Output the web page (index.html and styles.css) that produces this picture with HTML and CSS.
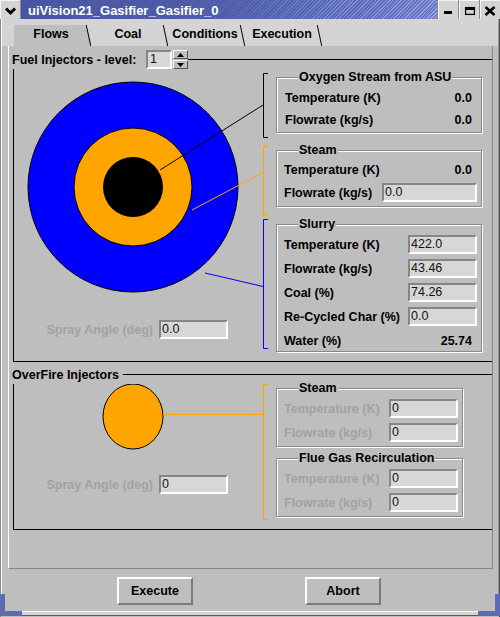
FILE: index.html
```html
<!DOCTYPE html>
<html>
<head>
<meta charset="utf-8">
<title>uiVision21_Gasifier_Gasifier_0</title>
<link rel="stylesheet" href="styles.css">
</head>
<body>
<div class="window">
  <div class="titlebar">
    <div class="tb-menu">
      <svg width="20" height="19" viewBox="0 0 20 19"><path d="M6 8.5 L10.5 13 L15 8.5" fill="none" stroke="#000" stroke-width="3"/></svg>
    </div>
    <div class="tb-title">uiVision21_Gasifier_Gasifier_0</div>
    <div class="tb-buttons">
      <div class="tb-btn"><svg width="20" height="19" viewBox="0 0 20 19"><rect x="6" y="11" width="8" height="3" fill="#000"/></svg></div>
      <div class="tb-btn"><svg width="20" height="19" viewBox="0 0 20 19"><rect x="6.6" y="7.6" width="8.8" height="6.8" fill="none" stroke="#000" stroke-width="1.3"/><rect x="6" y="7" width="10" height="3" fill="#000"/></svg></div>
      <div class="tb-btn"><svg width="20" height="19" viewBox="0 0 20 19"><path d="M5.5 7 L14.5 15 M14.5 7 L5.5 15" stroke="#000" stroke-width="2.6"/></svg></div>
    </div>
  </div>

  <div class="frame">
    <div class="tabbar">
      <div class="tab active">Flows</div>
      <div class="tab">Coal</div>
      <div class="tab">Conditions</div>
      <div class="tab">Execution</div>
    </div>

    <div class="panel">
      <div class="grp-head">
        <span class="grp-title fuel-title">Fuel Injectors - level:</span>
        <div class="spin">
          <span class="field w26">1</span>
          <div class="spin-btns">
            <div class="spin-btn"><svg width="7" height="4" viewBox="0 0 7 4"><path d="M0 4 L3.5 0 L7 4 Z" fill="#000"/></svg></div>
            <div class="spin-btn"><svg width="7" height="4" viewBox="0 0 7 4"><path d="M0 0 L3.5 4 L7 0 Z" fill="#000"/></svg></div>
          </div>
        </div>
        <span class="grp-line"></span>
      </div>

      <div class="grp-body fuel-body">
        <div class="diagram-col">
          <svg class="diagram" width="262" height="292" viewBox="14 69 262 292">
            <circle cx="133" cy="187" r="105" fill="#0000ff" stroke="#000" stroke-width="1"/>
            <circle cx="133" cy="187" r="59" fill="#ffa500" stroke="#000" stroke-width="1"/>
            <circle cx="133" cy="187" r="30" fill="#000"/>
            <line x1="160" y1="170" x2="263" y2="105" stroke="#000" stroke-width="1"/>
            <line x1="192" y1="210" x2="263" y2="172.5" stroke="#ffa500" stroke-width="1"/>
            <line x1="205" y1="273" x2="263" y2="286.5" stroke="#0000ff" stroke-width="1"/>
            <path d="M268 73.5 H263.5 V137.5 H268" fill="none" stroke="#000" stroke-width="1"/>
            <path d="M268 146.5 H263.5 V214.5 H268" fill="none" stroke="#ffa500" stroke-width="1"/>
            <path d="M268 219.5 H263.5 V348.5 H268" fill="none" stroke="#0000ff" stroke-width="1"/>
          </svg>
          <div class="spray">
            <span class="disabled">Spray Angle (deg)</span>
            <span class="field w69">0.0</span>
          </div>
        </div>
        <div class="boxes">
          <div class="box oxygen">
            <span class="box-title">Oxygen Stream from ASU</span>
            <div class="row h22"><span>Temperature (K)</span><span class="val">0.0</span></div>
            <div class="row h22"><span>Flowrate (kg/s)</span><span class="val">0.0</span></div>
          </div>
          <div class="box steam1">
            <span class="box-title">Steam</span>
            <div class="row h22"><span>Temperature (K)</span><span class="val">0.0</span></div>
            <div class="row h19 mt2"><span>Flowrate (kg/s)</span><span class="field w95">0.0</span></div>
          </div>
          <div class="box slurry">
            <span class="box-title">Slurry</span>
            <div class="row h19"><span>Temperature (K)</span><span class="field w69">422.0</span></div>
            <div class="row h19"><span>Flowrate (kg/s)</span><span class="field w69">43.46</span></div>
            <div class="row h19"><span>Coal (%)</span><span class="field w69">74.26</span></div>
            <div class="row h19"><span>Re-Cycled Char (%)</span><span class="field w69">0.0</span></div>
            <div class="row h19"><span>Water (%)</span><span class="val">25.74</span></div>
          </div>
        </div>
      </div>

      <div class="grp-head over-head">
        <span class="grp-title">OverFire Injectors</span>
        <span class="grp-line over-line"></span>
      </div>

      <div class="grp-body over-body">
        <div class="diagram-col">
          <svg class="diagram" width="262" height="145" viewBox="14 384 262 145">
            <ellipse cx="133" cy="416.5" rx="30" ry="32.5" fill="#ffa500" stroke="#000" stroke-width="1"/>
            <line x1="163" y1="414.5" x2="263" y2="414.5" stroke="#ffa500" stroke-width="1"/>
            <path d="M268 384.5 H263.5 V519.5 H268" fill="none" stroke="#ffa500" stroke-width="1"/>
          </svg>
          <div class="spray">
            <span class="disabled">Spray Angle (deg)</span>
            <span class="field w69">0</span>
          </div>
        </div>
        <div class="boxes">
          <div class="box steam2">
            <span class="box-title">Steam</span>
            <div class="row h19"><span class="disabled">Temperature (K)</span><span class="field w69">0</span></div>
            <div class="row h19"><span class="disabled">Flowrate (kg/s)</span><span class="field w69">0</span></div>
          </div>
          <div class="box flue">
            <span class="box-title">Flue Gas Recirculation</span>
            <div class="row h19"><span class="disabled">Temperature (K)</span><span class="field w69">0</span></div>
            <div class="row h19"><span class="disabled">Flowrate (kg/s)</span><span class="field w69">0</span></div>
          </div>
        </div>
      </div>
    </div>

    <div class="actions">
      <button class="btn">Execute</button>
      <button class="btn">Abort</button>
    </div>
    <div class="frame-bottom"></div>
  </div>
  <div class="corner corner-left"></div>
  <div class="corner corner-right"></div>
</div>
</body>
</html>
```

FILE: styles.css
```css
* { box-sizing: border-box; }
html, body { margin: 0; padding: 0; }
body {
  width: 500px;
  height: 617px;
  overflow: hidden;
  background: #bebebe;
  font-family: "Liberation Sans", Arial, sans-serif;
  font-size: 12.5px;
  font-weight: bold;
  color: #000;
}
.window {
  position: relative;
  width: 500px;
  height: 617px;
  display: flex;
  flex-direction: column;
  background: #bebebe;
}

/* title bar */
.titlebar {
  position: relative;
  flex: 0 0 19px;
  height: 19px;
  display: flex;
  background: linear-gradient(to right, #45539f 0%, #4a58a5 40%, #5a6ab8 70%, #7686cf 100%);
}
.titlebar::before {
  content: "";
  position: absolute;
  inset: 0;
  background: repeating-linear-gradient(135deg, rgba(190, 200, 250, 0.55) 0 1px, rgba(190, 200, 250, 0) 1px 2.6px);
  -webkit-mask-image: linear-gradient(to right, rgba(0,0,0,0.12) 0%, rgba(0,0,0,0.2) 45%, #000 88%);
  mask-image: linear-gradient(to right, rgba(0,0,0,0.12) 0%, rgba(0,0,0,0.2) 45%, #000 88%);
}
.tb-menu {
  position: relative;
  flex: 0 0 20px;
  background: #d4d4d4;
  border-right: 1px solid #8a8a8a;
  box-shadow: inset 1px 1px 0 #f4f4f4;
}
.tb-menu svg, .tb-btn svg { display: block; }
.tb-title {
  position: relative;
  flex: 1;
  color: #fff;
  font-size: 13px;
  line-height: 21px;
  padding-left: 7px;
  white-space: nowrap;
}
.tb-buttons { position: relative; display: flex; }
.tb-btn {
  width: 21px;
  height: 19px;
  background: #d4d4d4;
  border-left: 1px solid #8a8a8a;
  box-shadow: inset 1px 1px 0 #f4f4f4;
}

/* frame */
.frame {
  flex: 1;
  display: flex;
  flex-direction: column;
  border-left: 1px solid #8a8a8a;
  border-right: 1px solid #4a4a4a;
  box-shadow: inset 1px 0 0 #ffffff, inset -1px 0 0 #9a9a9a;
}

/* tabs */
.tabbar {
  flex: 0 0 27px;
  height: 27px;
  margin: 0 1px;
  background: #d4d4d4;
  display: flex;
  padding: 6px 0 0 12px;
}
.tab {
  position: relative;
  width: 77px;
  height: 21px;
  line-height: 19px;
  text-align: center;
  padding-right: 3px;
}
.tab::after {
  content: "";
  position: absolute;
  left: 74px;
  top: 0;
  width: 1px;
  height: 21px;
  background: #000;
  transform: skewX(12deg);
}
.tab.active {
  background: #bebebe;
  clip-path: polygon(0 0, 73px 0, 78px 100%, 0 100%);
}

/* panel */
.panel {
  flex: 1;
  margin: 0 6px 0 7px;
  border-left: 1px solid #ffffff;
  border-right: 1px solid #888888;
  border-bottom: 1px solid #888888;
  padding: 4px 0 0 4px;
}
.grp-head {
  display: flex;
  align-items: center;
  height: 19px;
}
.grp-title { margin-left: -1px; white-space: nowrap; }
.fuel-title { flex: 0 0 134px; }
.grp-line { flex: 1; height: 1px; background: #000; }
.over-head { margin-top: 5px; height: 15px; }
.over-line { margin-left: 4px; }

.spin { display: flex; width: 42px; height: 19px; }
.spin-btns {
  margin-left: 1px;
  width: 15px;
  display: flex;
  flex-direction: column;
  justify-content: space-between;
}
.spin-btn {
  height: 9px;
  background: #bebebe;
  border: 1px solid;
  border-color: #ffffff #555555 #555555 #ffffff;
  display: flex;
  align-items: center;
  justify-content: center;
}
.spin-btn svg { display: block; }

.grp-body {
  display: flex;
  border-left: 1px solid #000;
  border-bottom: 1px solid #000;
}
.fuel-body { height: 293px; }
.over-body { height: 146px; margin-top: 2px; }

.diagram-col {
  flex: 0 0 262px;
  width: 262px;
  display: grid;
}
.diagram-col > * { grid-area: 1 / 1; }
.diagram { display: block; }
.spray {
  align-self: end;
  justify-self: end;
  display: flex;
  align-items: center;
  gap: 6px;
  margin-right: 48px;
}
.fuel-body .spray { margin-bottom: 22px; }
.over-body .spray { margin-bottom: 35px; }

.disabled { color: #a2a2a2; }

.field {
  display: block;
  height: 19px;
  border-style: solid;
  border-width: 2px;
  border-color: #868686 #ffffff #ffffff #868686;
  background: #d7d7d7;
  font-weight: normal;
  font-size: 12.5px;
  line-height: 15px;
  color: #111;
  padding-left: 1px;
  white-space: nowrap;
  overflow: hidden;
}
.w26 { width: 26px; flex: 0 0 26px; padding-left: 2px; }
.w69 { width: 69px; flex: 0 0 69px; }
.w95 { width: 95px; flex: 0 0 95px; }

/* group boxes */
.boxes { display: flex; flex-direction: column; }
.fuel-body .boxes { padding-top: 8px; }
.over-body .boxes { padding-top: 4px; }
.box {
  position: relative;
  border: 1px solid #8a8a8a;
  box-shadow: 1px 1px 0 #ffffff, inset 1px 1px 0 #ffffff;
}
.box-title {
  position: absolute;
  top: -8px;
  left: 21px;
  padding: 0 1px;
  background: #bebebe;
  line-height: 14px;
  white-space: nowrap;
}
.row {
  display: flex;
  align-items: center;
  justify-content: space-between;
  white-space: nowrap;
}
.h22 { height: 22px; }
.h19 { height: 19px; }
.mt2 { margin-top: 2px; }
.val { padding-right: 5px; }

.oxygen { width: 206px; padding: 9px 4px 1px 8px; }
.steam1 { width: 206px; margin-top: 17px; padding: 8px 4px 4px 7px; }
.slurry {
  width: 206px;
  margin-top: 17px;
  padding: 10px 4px 1px 7px;
  display: flex;
  flex-direction: column;
  gap: 5px;
}
.steam2, .flue {
  width: 187px;
  padding: 10px 4px 4px 7px;
  display: flex;
  flex-direction: column;
  gap: 5px;
}
.flue { margin-top: 11px; }

/* bottom buttons */
.actions {
  flex: 0 0 41px;
  height: 41px;
  display: flex;
  justify-content: center;
  align-items: flex-start;
  gap: 112px;
  padding: 8px 2px 0 0;
}
.btn {
  width: 76px;
  height: 28px;
  margin: 0;
  padding: 0;
  background: #bebebe;
  border: 2px solid;
  border-color: #ffffff #7a7a7a #7a7a7a #ffffff;
  font-family: "Liberation Sans", Arial, sans-serif;
  font-size: 12.5px;
  font-weight: bold;
  color: #000;
}
.frame-bottom {
  flex: 0 0 7px;
  height: 7px;
  background: linear-gradient(to bottom, #bebebe 0 1px, #ffffff 1px 2px, #d4d4d4 2px 5px, #5a5a5a 5px 6px, #bebebe 6px 7px);
}
.corner {
  position: absolute;
  bottom: 1px;
  width: 22px;
  height: 22px;
  border-bottom: 5px solid #5d6bb4;
}
.corner-left { left: 0; border-left: 5px solid #5d6bb4; }
.corner-right { right: 0; border-right: 5px solid #5d6bb4; }
```
